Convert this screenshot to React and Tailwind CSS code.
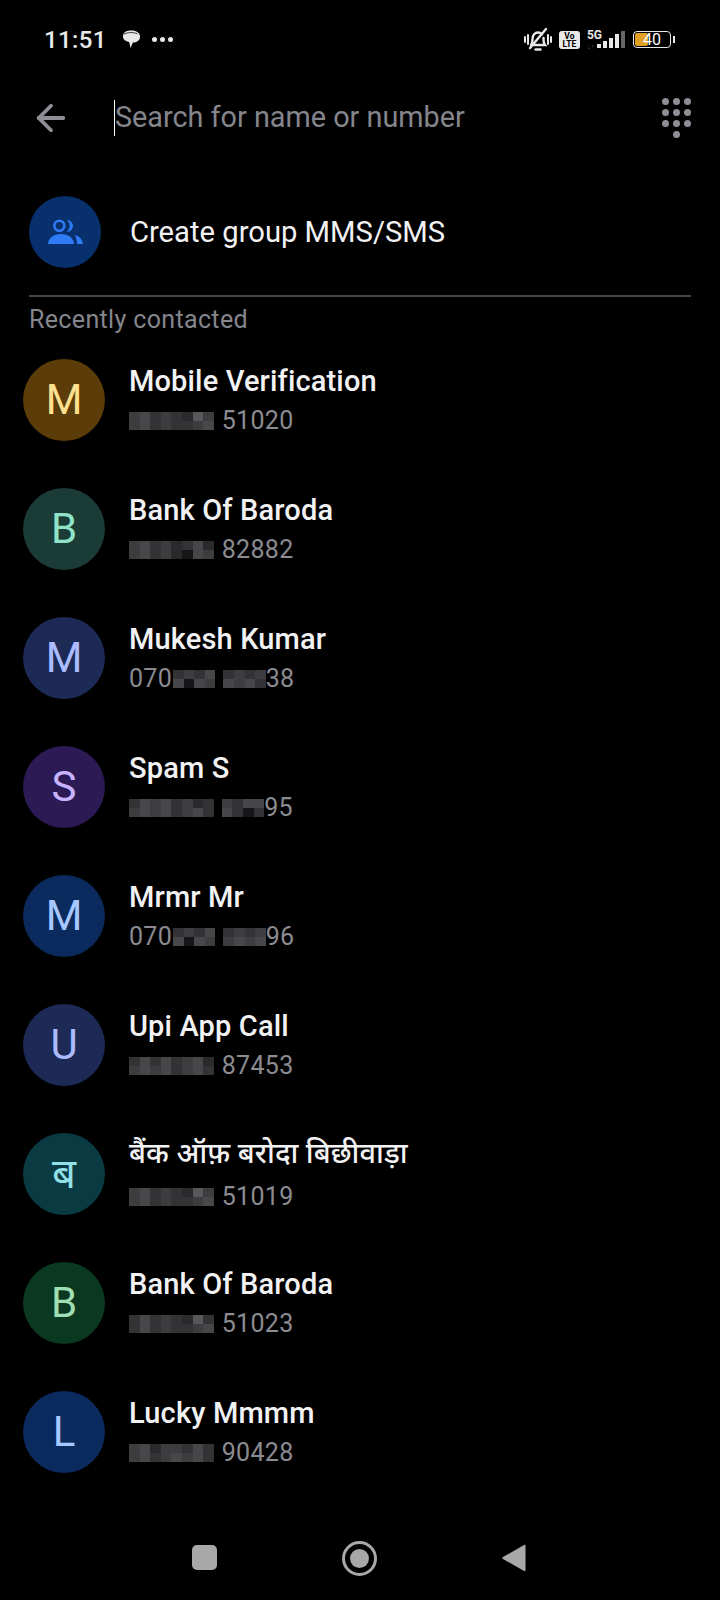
import { ArrowLeft } from "lucide-react";

const sans = "font-['Roboto','Noto_Sans','Noto_Sans_Devanagari',sans-serif]";

const shades = {
  a: "bg-[#2a2a2c]",
  b: "bg-[#333336]",
  c: "bg-[#3d3d40]",
  d: "bg-[#47474a]",
  e: "bg-[#58585b]",
  f: "bg-[#161618]",
};

const contacts = [
  { initial: "M", name: "Mobile Verification", tail: "51020", circle: "bg-[#5c3c09]", letter: "text-[#ffe08f]", mosaic: ["cdbcbaec", "cdbcbbcd"] },
  { initial: "B", name: "Bank Of Baroda", tail: "82882", circle: "bg-[#1b3b36]", letter: "text-[#8fe3c9]", mosaic: ["cdbcabda", "cdbcafdc"] },
  { initial: "M", name: "Mukesh Kumar", prefix: "070", tail: "38", circle: "bg-[#1c2a55]", letter: "text-[#aabcff]", mosaic: ["bcbd|bcbc", "dfdc|dcdb"] },
  { initial: "S", name: "Spam S", tail: "95", circle: "bg-[#2c1a54]", letter: "text-[#c7b3ff]", mosaic: ["bdcdbcab", "cdcdbcdb"], mosaicEnd: ["cbdd", "dbfb"] },
  { initial: "M", name: "Mrmr Mr", prefix: "070", tail: "96", circle: "bg-[#0b2a5e]", letter: "text-[#a4c8ff]", mosaic: ["bcbd|bcbc", "dfdc|cdcd"] },
  { initial: "U", name: "Upi App Call", tail: "87453", circle: "bg-[#1c2a55]", letter: "text-[#aabcff]", mosaic: ["bdbdbcda", "cdcdbcdb"] },
  { initial: "ब", name: "बैंक ऑफ़ बरोदा बिछीवाड़ा", tail: "51019", circle: "bg-[#0a3b42]", letter: "text-[#92e1e8]", mosaic: ["cdbcbaec", "cdbcbbcd"], hindi: true },
  { initial: "B", name: "Bank Of Baroda", tail: "51023", circle: "bg-[#0b3820]", letter: "text-[#a0dfb4]", mosaic: ["bdbcbaeb", "bdbcbbcd"] },
  { initial: "L", name: "Lucky Mmmm", tail: "90428", circle: "bg-[#0b2a5e]", letter: "text-[#a4c8ff]", mosaic: ["cdaccbdb", "cdbcdcdb"] },
];

// pixelated patch that hides digits of the number
const Mosaic = ({ rows }) => (
  <div className="flex flex-col">
    {rows.map((row, i) => (
      <div key={i} className="flex h-[9px]">
        {row.split("").map((ch, j) =>
          ch === "|" ? (
            <div key={j} className="w-[8px]" />
          ) : (
            <div key={j} className={`w-[10.6px] ${shades[ch]}`} />
          )
        )}
      </div>
    ))}
  </div>
);

const ContactRow = ({ contact }) => (
  <div className="flex h-[129px] items-center pl-[23px]">
    <div className={`flex h-[82px] w-[82px] shrink-0 items-center justify-center rounded-full text-[42px] ${contact.circle} ${contact.letter}`}>
      {contact.initial}
    </div>
    <div className="ml-[24px] flex flex-col">
      <div className={`text-[29px] font-medium leading-[40px] tracking-[0.15px] text-[#f2f2f4] ${contact.hindi ? "mb-[4px]" : ""}`}>{contact.name}</div>
      <div className="flex h-[38px] items-center pt-[2px] text-[25px] tracking-[0.3px] text-[#8b8b90]">
        {contact.prefix && <span className="w-[44px]">{contact.prefix}</span>}
        <Mosaic rows={contact.mosaic} />
        {contact.mosaicEnd && <div className="ml-[8px]"><Mosaic rows={contact.mosaicEnd} /></div>}
        <span className={contact.tail.length === 5 ? "ml-[8px]" : ""}>{contact.tail}</span>
      </div>
    </div>
  </div>
);

const StatusBar = () => (
  <div className="flex h-[78px] items-center justify-between pl-[44px] pr-[45px] pt-[1px] text-[#e8e8e8]">
    <div className="flex items-center">
      <span className="text-[24px] font-medium tracking-[0.4px]">11:51</span>
      <svg className="ml-[15px]" width="19" height="19" viewBox="0 0 20 20" fill="#e8e8e8">
        <path d="M4 1.500c3-1.200 9-1.200 12 .5 1.500 1 3 2.500 3 5 0 2.500-1.500 4.500-4 5.500-1 .4-2.500.8-3.500.7L9 19 7.500 12.500C4 12 1 10 1 6.500 1 4.500 2 2.500 4 1.500z" />
        <path d="M2 4.500C5 2.500 12 2 16 4" fill="none" stroke="#000" strokeWidth="0.8" />
      </svg>
      <div className="ml-[11px] flex gap-[3px]">
        <span className="h-[5px] w-[5px] rounded-full bg-[#e8e8e8]" />
        <span className="h-[5px] w-[5px] rounded-full bg-[#e8e8e8]" />
        <span className="h-[5px] w-[5px] rounded-full bg-[#e8e8e8]" />
      </div>
    </div>
    <div className="flex items-center">
      {/* muted bell */}
      <svg width="30" height="26" viewBox="0 0 30 26" fill="none" stroke="#e8e8e8" strokeWidth="2.4" strokeLinecap="round">
        <path d="M8 18c1.500-1.500 1.500-3 1.500-6 0-4 2.500-6.500 5.500-6.500 1.600 0 3 .6 4 1.800M20.500 11c0 3.500.3 5.500 1.500 7H11" />
        <path d="M12.500 22.500h5" />
        <path d="M23 2 7 21" />
        <path d="M2 10v5M5 8v9M25 8v9M28 10v5" strokeWidth="2" />
      </svg>
      <div className="ml-[6px] flex h-[18px] w-[21px] flex-col items-center justify-center rounded-[3px] bg-[#e8e8e8] text-[8.500px] font-bold leading-[8px] text-black">
        <span>Vo</span>
        <span>LTE</span>
      </div>
      <div className="ml-[7px] flex h-[20px] flex-col justify-between">
        <span className="text-[12px] font-bold leading-[10px] text-[#e8e8e8]">5G</span>
        <span className="text-[7px] leading-[6px] text-[#666]">↓↑</span>
      </div>
      <div className="ml-[-5px] flex h-[17px] items-end gap-[2px]">
        <span className="h-[4px] w-[4px] bg-[#e8e8e8]" />
        <span className="h-[7px] w-[4px] bg-[#e8e8e8]" />
        <span className="h-[10px] w-[4px] bg-[#e8e8e8]" />
        <span className="h-[14px] w-[4px] bg-[#e8e8e8]" />
        <span className="h-[17px] w-[4px] bg-[#666]" />
      </div>
      <div className="relative ml-[8px] flex h-[17px] w-[38px] items-center rounded-[4px] border border-[#e8e8e8] p-[1px]">
        <div className="h-full w-[13px] rounded-[2px] bg-[#e0a024]" />
        <span className="absolute inset-0 text-center text-[16px] leading-[15px] text-white">40</span>
      </div>
      <div className="ml-[2px] h-[7px] w-[2px] bg-[#e8e8e8]" />
    </div>
  </div>
);

const Dialpad = () => (
  <div className="grid w-[29px] grid-cols-3 gap-x-[4px] gap-y-[3.700px]">
    {[0, 1, 2, 3, 4, 5, 6, 7, 8].map((i) => (
      <span key={i} className="h-[7px] w-[7px] rounded-full bg-[#8e8e96]" />
    ))}
    <span className="col-start-2 h-[7px] w-[7px] rounded-full bg-[#8e8e96]" />
  </div>
);

const NavBar = () => (
  <div className="flex h-[82px] items-start justify-between pl-[192px] pr-[194px] pt-[15px]">
    <div className="mt-[12px] h-[25px] w-[25px] rounded-[5px] bg-[#a8a8a8]" />
    <div className="mt-[8px] flex h-[35px] w-[35px] items-center justify-center rounded-full border-[3px] border-[#a8a8a8]">
      <div className="h-[19px] w-[19px] rounded-full bg-[#a8a8a8]" />
    </div>
    <svg className="mt-[10px]" width="25" height="30" viewBox="0 0 26 30" fill="#a8a8a8">
      <path d="M24 1.500c.8-.5 1.500 0 1.500 1v25c0 1-.8 1.500-1.500 1L2 16c-1-.6-1-1.400 0-2z" />
    </svg>
  </div>
);

const App = () => (
  <div className={`flex h-[1600px] w-[720px] flex-col overflow-hidden bg-black ${sans}`}>
    <StatusBar />
    <div className="flex h-[80px] items-center pl-[30px] pr-[29px]">
      <ArrowLeft className="text-[#8e8e96]" size={42} strokeWidth={2.2} />
      <div className="ml-[42px] h-[36px] w-px bg-white" />
      <span className="flex-1 text-[28.800px] text-[#85858c]">Search for name or number</span>
      <Dialpad />
    </div>
    <div className="flex h-[137px] items-center pl-[29px] pt-[11px]">
      <div className="flex h-[72px] w-[72px] items-center justify-center rounded-full bg-[#07306c]">
        <svg width="38" height="38" viewBox="0 0 38 38" fill="#2f7bf5">
          <circle cx="13.300" cy="12.700" r="5" fill="none" stroke="#2f7bf5" strokeWidth="2.600" />
          <path d="M21 7a6 6 0 0 1 0 12a8 8 0 0 0 0-12z" />
          <path d="M2 31c0-6 6-10 13-10s13 4 13 10z" />
          <path d="M29 22c4 1 7.500 4 8 9h-6c0-4-1-6-2-9z" />
        </svg>
      </div>
      <span className="ml-[29px] mt-[2px] text-[29.200px] text-[#f2f2f4]">Create group MMS/SMS</span>
    </div>
    <div className="mx-[29px] h-[2px] bg-[#444446]" />
    <div className="flex h-[38px] items-center pl-[29px] pt-[7px] text-[25px] tracking-[0.35px] text-[#85858c]">Recently contacted</div>
    {contacts.map((contact, i) => (
      <ContactRow key={i} contact={contact} />
    ))}
    <div className="flex-1" />
    <NavBar />
  </div>
);

export default App;
